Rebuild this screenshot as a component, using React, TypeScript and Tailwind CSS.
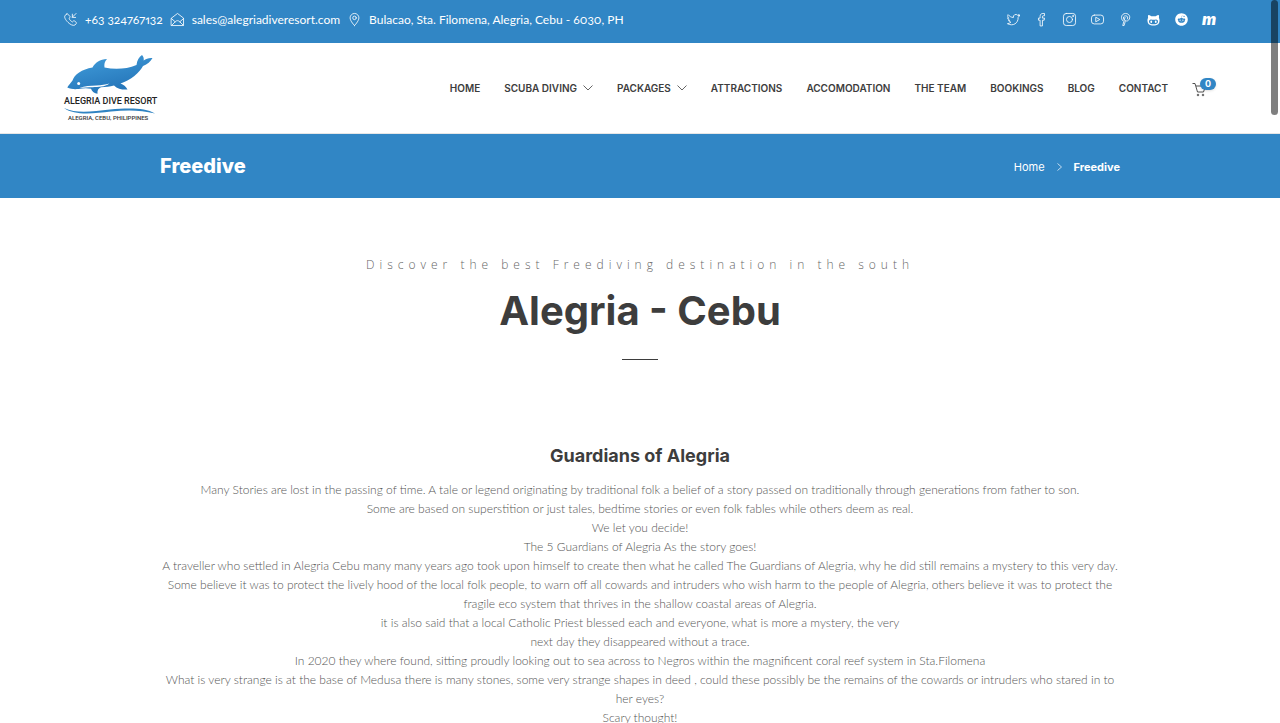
import type { ReactNode } from "react";
import { FaReddit } from "react-icons/fa";

function Icon({ children }: { children: ReactNode }) {
  return (
    <svg
      viewBox="0 0 28 28"
      className="size-[13px] shrink-0 overflow-visible"
      fill="none"
      stroke="currentColor"
      strokeWidth="1.8"
      strokeLinecap="round"
      strokeLinejoin="round"
      aria-hidden="true"
    >
      {children}
    </svg>
  );
}

const phone = (
  <Icon>
    <path d="M6 2 2.500 5c-3 4 1 10 6 15s11 8 15 6l3-3.500c.8-.8.700-1.600-.1-2.300l-4-3.200c-.7-.5-1.500-.4-2.100.2l-2 2c-3-1.200-6-4-7.500-7.500l2-2c.6-.6.7-1.300.2-2L8.400 2.500C7.700 1.600 6.800 1.300 6 2Z" />
    <path d="m26 1-8 8m0-6.500V9.500h7" />
  </Icon>
);
const mail = (
  <Icon>
    <path d="M1 11 14 1l13 10v16H1Z" />
    <path d="m1 12 8 7m18-7-8 7M2 26l8-8c2.500-2 5.500-2 8 0l8 8" />
  </Icon>
);
const pin = (
  <Icon>
    <path d="M14 27S4.500 17.500 4.500 10.500a9.500 9.500 0 0 1 19 0C23.500 17.500 14 27 14 27Z" />
    <circle cx="14" cy="10.500" r="3.800" />
  </Icon>
);

const contacts = [
  { icon: phone, label: "+63 324767132", href: "tel:+63324767132" },
  { icon: mail, label: "sales@alegriadiveresort.com", href: "mailto:sales@alegriadiveresort.com" },
  { icon: pin, label: "Bulacao, Sta. Filomena, Alegria, Cebu - 6030, PH", href: "#location" },
];

const socials = [
  {
    name: "Twitter",
    icon: (
      <Icon>
        <path d="M27 5.500c-1 .5-2 .7-2.800.8 1-.7 1.700-1.700 2-2.800-1 .6-2.200 1-3.400 1.300a5.300 5.300 0 0 0-9 4.900C9.300 9.400 5.500 7.300 2.300 3.500c-1.500 2.700-.6 6.200 1.600 7.700-.9 0-1.700-.3-2.400-.7 0 2.600 1.800 4.800 4.300 5.300-.8.2-1.600.3-2.400.1.700 2.200 2.700 3.700 5 3.700A11 11 0 0 1 1 23c12 6.500 23.500-1 23-13.500 1-.8 2.300-2.300 3-4Z" />
      </Icon>
    ),
  },
  {
    name: "Facebook",
    icon: (
      <Icon>
        <path d="M11 27V15.500H7.500V11H11V7.500c0-4 2-6.500 6-6.500h3.500v5H18c-1.600 0-2 .6-2 2v3h4.500l-.7 4.500H16V27Z" />
      </Icon>
    ),
  },
  {
    name: "Instagram",
    icon: (
      <Icon>
        <rect x="1" y="1" width="26" height="26" rx="6" />
        <circle cx="14" cy="14" r="6.500" />
        <circle cx="21.500" cy="6.500" r="1" />
      </Icon>
    ),
  },
  {
    name: "YouTube",
    icon: (
      <Icon>
        <rect x="1" y="4.500" width="26" height="19" rx="6" />
        <path d="m11 9.500 8 4.500-8 4.500Z" />
      </Icon>
    ),
  },
  {
    name: "Pinterest",
    icon: (
      <Icon>
        <path d="M8 16.500C2.500 11 5.500 1 14 1s12 8.500 6.500 14.500c-2.300 2.300-5 2.300-6.500.5L11 27H8L13 9.500m-3 4c-2-4 .5-7.500 4.500-7.500s5.500 4 3.500 7" />
      </Icon>
    ),
  },
  {
    name: "GitHub",
    icon: (
      <svg viewBox="0 0 26 26" className="size-[13px]" fill="currentColor" aria-hidden="true">
        <path
          fillRule="evenodd"
          d="M2.500 4c2.500 0 4.500 1.200 6 2.500h9c1.500-1.300 3.500-2.500 6-2.500.7 2 .8 4 .3 6 1 1.400 1.500 3 1.200 6-.4 6-4 9-12 9S1.400 22 1 16c-.3-3 .2-4.600 1.200-6-.5-2-.4-4 .3-6ZM8 13c-3 0-4 2-4 4.500C4 21.500 8 22.500 13 22.500s9-1 9-5c0-2.500-1-4.500-4-4.500-2 0-3 .5-5 .5S10 13 8 13Z"
        />
        <ellipse cx="8.500" cy="17.500" rx="1.800" ry="2.600" />
        <ellipse cx="17.500" cy="17.500" rx="1.800" ry="2.600" />
      </svg>
    ),
  },
  { name: "Reddit", icon: <FaReddit className="size-[13px]" /> },
  {
    name: "Mixcloud",
    icon: <span className="font-[Inter] text-[15px] leading-[14px] font-black italic">m</span>,
  },
];

const nav = [
  { label: "Home" },
  { label: "Scuba Diving", menu: true },
  { label: "Packages", menu: true },
  { label: "Attractions" },
  { label: "Accomodation" },
  { label: "The Team" },
  { label: "Bookings" },
  { label: "Blog" },
  { label: "Contact" },
];

const story = [
  "Many Stories are lost in the passing of time. A tale or legend originating by traditional folk a belief of a story passed on traditionally through generations from father to son.",
  "Some are based on superstition or just tales, bedtime stories or even folk fables while others deem as real.",
  "We let you decide!",
  "The 5 Guardians of Alegria As the story goes!",
  "A traveller who settled in Alegria Cebu many many years ago took upon himself to create then what he called The Guardians of Alegria, why he did still remains a mystery to this very day.",
  "Some believe it was to protect the lively hood of the local folk people, to warn off all cowards and intruders who wish harm to the people of Alegria, others believe it was to protect the fragile eco system that thrives in the shallow coastal areas of Alegria.",
  "it is also said that a local Catholic Priest blessed each and everyone, what is more a mystery, the very",
  "next day they disappeared without a trace.",
  "In 2020 they where found, sitting proudly looking out to sea across to Negros within the magnificent coral reef system in Sta.Filomena",
  "What is very strange is at the base of Medusa there is many stones, some very strange shapes in deed , could these possibly be the remains of the cowards or intruders who stared in to her eyes?",
  "Scary thought!",
];

function Logo() {
  return (
    <svg viewBox="0 0 92 68" className="h-[68px] w-[92px] overflow-visible" role="img" aria-label="Alegria Dive Resort">
      <defs>
        <linearGradient id="body" x1="0" y1="0" x2="0.5" y2="1">
          <stop offset="0" stopColor="#43a0dd" />
          <stop offset="1" stopColor="#2474b8" />
        </linearGradient>
      </defs>
      <path
        fill="url(#body)"
        d="M3.300 33.500C4 31.500 7 29 8.500 26.500 10 21 18 15 28.500 13.500 31 8.500 36 5.500 43 5c-2.500 2.500-3 5.500-2.500 8.500 11 2.500 22 1.500 32-2.500C73 6.500 75 3 78 1c1.500 1.500 2 3.500 1.700 5.500C82 4.500 85 3.700 88.500 4c-2 3.500-5 6.500-9.500 8C75.500 18.500 67 26 56.500 29.500c3 1 5.500 3 7 6C59 36 53.500 35 50 31.500c-4 1-8.500 1.700-13 1.800-2.500 1-4 3-3.500 6.500-3-.5-5.500-2-6.500-5-4.500-1-8.500-.5-12.500.3-3.500 0-8 .4-11.200-1.600Z"
      />
      <path d="M15.500 34c5.500-2.500 11-2.300 17-2.600 5-.2 9-.8 13-1.900-5 3.500-11 3.400-17 3.700-4.500 0-9 .2-13 .8Z" fill="#fff" />
      <circle cx="14.700" cy="29.500" r="1.500" fill="#fff" />
      <text x="0" y="50" fontSize="9" fontWeight="500" fill="#222" fontFamily="Roboto, sans-serif">
        ALEGRIA DIVE RESORT
      </text>
      <path d="M0 54c13 6 28 3.500 46 1.500 18-1.500 35-2 45 4-15-4-30-3.500-44-2C30 59.500 11 62 0 54Z" fill="#2f83c2" />
      <text x="4" y="66" fontSize="6" fontWeight="500" fill="#333" fontFamily="Roboto, sans-serif">
        ALEGRIA, CEBU, PHILIPPINES
      </text>
    </svg>
  );
}

export default function App() {
  return (
    <div className="h-screen overflow-y-auto bg-white font-[Lato,sans-serif] text-[#3d3d3d] [scrollbar-width:none]">
      <div className="flex h-[43px] items-center justify-between bg-[#3186c5] px-16 pb-1 text-white">
        <address className="flex items-center gap-2 text-[12px] leading-5 not-italic oldstyle-nums proportional-nums">
          {contacts.map((c) => (
            <a key={c.label} href={c.href} className="flex items-center gap-2">
              {c.icon}
              {c.label}
            </a>
          ))}
        </address>
        <div className="flex items-center gap-[14px]">
          {socials.map((s) => (
            <a key={s.name} href="#social" aria-label={s.name} className="flex size-[14px] items-center justify-center">
              {s.icon}
            </a>
          ))}
        </div>
      </div>

      <header className="flex h-[91px] items-center justify-between border-b border-[#e6e6e6] px-16">
        <a href="#home">
          <Logo />
        </a>
        <nav className="flex items-center gap-6 font-[Inter,sans-serif] text-[10px] leading-4 font-semibold">
          {nav.map((n) => (
            <a key={n.label} href="#page" className="flex items-center gap-1.5 uppercase">
              {n.label}
              {n.menu && (
                <svg viewBox="0 0 10 6" className="h-[6px] w-[10px]" fill="none" stroke="currentColor" strokeWidth="0.8" aria-hidden="true">
                  <path d="m.5.500 4.500 4.500L9.500.500" />
                </svg>
              )}
            </a>
          ))}
          <a href="#cart" aria-label="Cart" className="relative block h-5 w-6">
            <svg viewBox="0 0 14 15" className="mt-1 h-[15px] w-[14px]" fill="none" stroke="currentColor" strokeWidth="0.9" aria-hidden="true">
              <path d="M.500 1.500h2.500L5.500 10h6l2-6H4" />
              <circle cx="6" cy="13" r="0.800" />
              <circle cx="11" cy="13" r="0.800" />
            </svg>
            <span className="absolute top-0 right-0 flex h-3 w-4 items-center justify-center rounded-full bg-[#3186c5] text-[9px] font-bold text-white shadow-sm">
              0
            </span>
          </a>
        </nav>
      </header>

      <section className="bg-[#3186c5] text-white">
        <div className="mx-auto flex h-16 max-w-[960px] items-center justify-between font-[Inter,sans-serif]">
          <h1 className="text-[20px] font-extrabold">Freedive</h1>
          <div className="flex items-center gap-3 pt-0.5 text-[11px]">
            <a href="#home">Home</a>
            <svg viewBox="0 0 5 8" className="h-2 w-[5px]" fill="none" stroke="currentColor" strokeWidth="0.7" aria-hidden="true">
              <path d="m.500.500 4 3.500-4 3.500" />
            </svg>
            <span className="font-bold">Freedive</span>
          </div>
        </div>
      </section>

      <main className="mx-auto max-w-[960px] pt-14 text-center">
        <p className="font-['Open_Sans',sans-serif] text-[12px] leading-[22px] font-light tracking-[5px] text-[#666]">
          Discover the best Freediving destination in the south
        </p>
        <h2 className="mt-3 font-[Inter,sans-serif] text-[40px] leading-[46px] font-bold">Alegria - Cebu</h2>
        <hr className="mx-auto mt-[25px] w-9 border-[#3d3d3d]" />
        <h3 className="mt-[84px] font-[Inter,sans-serif] text-[18px] leading-6 font-bold">Guardians of Alegria</h3>
        <div className="mt-3 text-[12px] leading-[19px] font-light text-[#555]">
          {story.map((line) => (
            <p key={line}>{line}</p>
          ))}
        </div>
      </main>

      <div className="fixed top-0 right-0.5 h-[115px] w-[7px] rounded-full bg-black/50" />
    </div>
  );
}
